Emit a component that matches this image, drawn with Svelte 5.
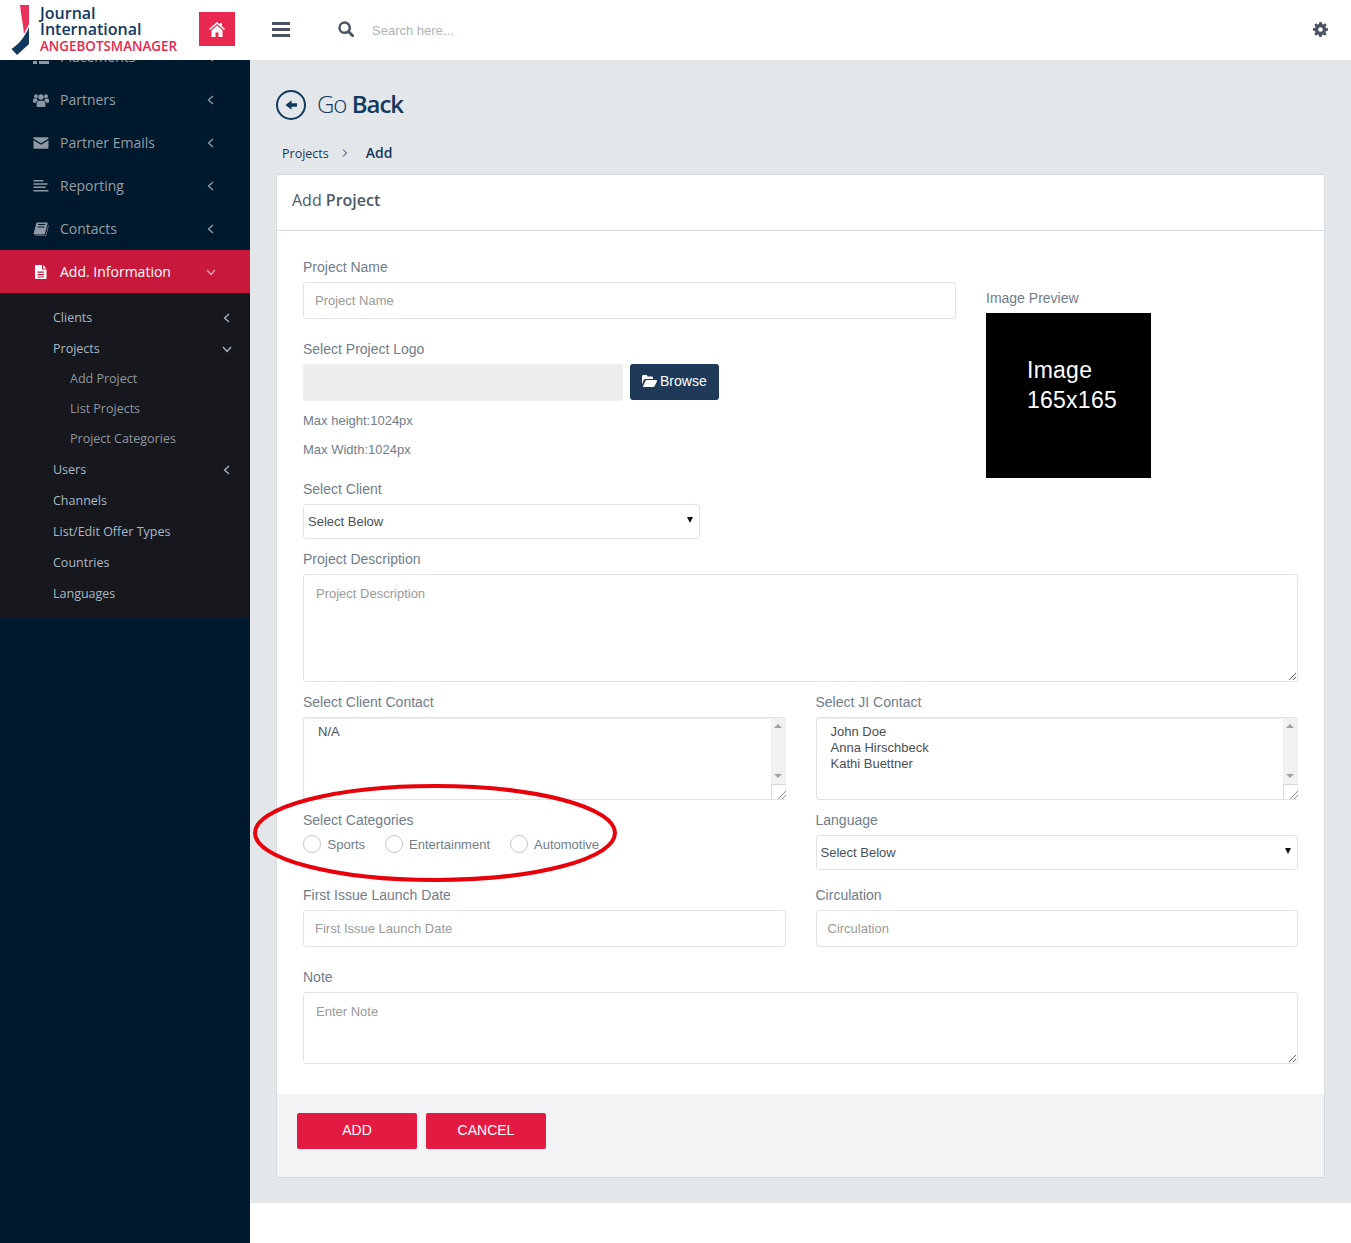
<script>
  const mainNav = [
    { label: 'Placements', icon: 'list' },
    { label: 'Partners', icon: 'users' },
    { label: 'Partner Emails', icon: 'mail' },
    { label: 'Reporting', icon: 'lines' },
    { label: 'Contacts', icon: 'book' }
  ];

  const subNav = [
    { label: 'Clients', arrow: 'left' },
    { label: 'Projects', arrow: 'down' },
    { label: 'Add Project', nested: true },
    { label: 'List Projects', nested: true },
    { label: 'Project Categories', nested: true },
    { label: 'Users', arrow: 'left' },
    { label: 'Channels' },
    { label: 'List/Edit Offer Types' },
    { label: 'Countries' },
    { label: 'Languages' }
  ];

  const categories = ['Sports', 'Entertainment', 'Automotive'];
</script>

{#snippet chevron(dir)}
  <svg class="chev" width="10" height="10" viewBox="0 0 10 10">
    {#if dir === 'left'}
      <polyline points="7,1 2.5,5 7,9" />
    {:else}
      <polyline points="1,3 5,7.5 9,3" />
    {/if}
  </svg>
{/snippet}

{#snippet navIcon(name)}
  <svg class="nav-icon" width="16" height="14" viewBox="0 0 16 14">
    {#if name === 'list'}
      <path d="M0 1h4v3H0zM6 1h10v3H6zM0 6h4v3H0zM6 6h10v3H6zM0 11h4v3H0zM6 11h10v3H6z" />
    {:else if name === 'users'}
      <circle cx="3" cy="3.2" r="1.9" />
      <circle cx="13" cy="3.2" r="1.9" />
      <circle cx="8" cy="4" r="2.7" />
      <path d="M0 9V7.2C0 6 1 5.6 2 5.6h2c.1.9.5 1.6 1 2-1 .3-1.8 1-2 2.2H1C.4 9.8 0 9.600 0 9zM16 9V7.200C16 6 15 5.600 14 5.600h-2c-.1.9-.5 1.600-1 2 1 .3 1.800 1 2 2.200h2c.6 0 1-.2 1-.8zM3.600 13V10.500C3.600 8.800 4.800 7.800 6 7.800h4c1.200 0 2.400 1 2.400 2.700V13c0 .6-.5 1-1 1H4.600c-.5 0-1-.4-1-1z" />
    {:else if name === 'mail'}
      <path d="M0.500 2.200C.5 1.500 1 1.200 1.600 1.200h12.800c.6 0 1.100.4 1.100 1v.5L8 7.300 .5 2.700zM.5 4.200L8 8.800l7.500-4.600v7.600c0 .6-.5 1-1.100 1H1.600c-.6 0-1.100-.4-1.100-1z" />
    {:else if name === 'lines'}
      <path d="M.5 1h10v1.500H.5zM.5 4.300h14v1.500H.5zM.5 7.600h12v1.500H.5zM.5 10.900h15v1.500H.5z" />
    {:else if name === 'book'}
      <path d="M3.500 0.500h10.500c.6 0 .8.500.6 1L12.200 11c-.3 1-.9 1.500-1.800 1.500H1.800C.9 12.500.6 11.800 .8 11zM5 3h7l.3-1H5.300zM4.400 5.500h7l.3-1H4.700zM2.500 13.500h8.500c1 0 1.800-.6 2.200-1.600l2-8.900.5.500-2.100 9.200c-.3 1-1.200 1.800-2.300 1.800H2.500z" />
    {:else}
      <path d="M3 0h6v4.500h4.500V13c0 .6-.4 1-1 1H3c-.6 0-1-.4-1-1V1c0-.6.4-1 1-1zM10 0l3.500 3.500H10zM4.500 6.500v1.200h6.500V6.500zM4.500 9v1.200h6.500V9zM4.500 11.400v1.100h6.500v-1.100z" />
    {/if}
  </svg>
{/snippet}

<div class="page">
  <header class="topbar">
    <div class="logo">
      <svg width="30" height="60" viewBox="0 0 30 60">
        <path d="M20 5h9v19l-5 10C23 24 21 14 20 5z" fill="#e8325a" />
        <path d="M29 27v17L17 55l-5.500-6C18 45 25 37 29 27z" fill="#12395f" />
      </svg>
      <div class="logo-text">
        <span class="logo-name">Journal</span>
        <span class="logo-name">International</span>
        <span class="logo-sub">ANGEBOTSMANAGER</span>
      </div>
    </div>
    <button class="home" aria-label="Home">
      <svg width="16" height="15" viewBox="0 0 16 15" fill="#fff">
        <path d="M8 0l3 2.600V1h2v3.300L16 7l-.9 1L8 2 .9 8 0 7zM2.500 8.200L8 3.500l5.500 4.700V15H9.500v-4.500h-3V15h-4z" />
      </svg>
    </button>
    <div class="burger"><span></span><span></span><span></span></div>
    <svg class="search-icon" width="16" height="16" viewBox="0 0 18 18" fill="none" stroke="#4a5464">
      <circle cx="7.500" cy="7.500" r="5.800" stroke-width="2.800" />
      <path d="M12 12l4.500 4.500" stroke-width="3.200" stroke-linecap="round" />
    </svg>
    <input class="search" placeholder="Search here..." />
    <svg class="gear" width="15" height="15" viewBox="0 0 16 16" fill="#4a5464">
      <path fill-rule="evenodd" d="M6.700 0h2.600l.4 2.200 1.200.5L12.800 1.400l1.800 1.800-1.300 1.900.5 1.200 2.200.4v2.600l-2.200.4-.5 1.200 1.300 1.900-1.800 1.800-1.900-1.300-1.200.5-.4 2.200H6.700l-.4-2.200-1.200-.5-1.900 1.300-1.800-1.800 1.300-1.900-.5-1.200L0 9.300V6.700l2.200-.4.500-1.200L1.400 3.200l1.800-1.800 1.900 1.300 1.200-.5zM8 5.500a2.500 2.500 0 1 0 0 5 2.500 2.500 0 0 0 0-5z" />
    </svg>
  </header>

  <div class="layout">
    <aside class="sidebar">
      <nav class="nav">
        {#each mainNav as item}
          <div class="nav-item">
            {@render navIcon(item.icon)}
            <span class="nav-label">{item.label}</span>
            {@render chevron('left')}
          </div>
        {/each}
        <div class="nav-item active">
          {@render navIcon('file')}
          <span class="nav-label">Add. Information</span>
          {@render chevron('down')}
        </div>
        <div class="sub-nav">
          {#each subNav as item}
            <div class="sub-item" class:nested={item.nested}>
              <span>{item.label}</span>
              {#if item.arrow}
                {@render chevron(item.arrow)}
              {/if}
            </div>
          {/each}
        </div>
      </nav>
    </aside>

    <div class="main-wrap">
      <main class="main">
        <div class="go-back">
          <svg width="30" height="30" viewBox="0 0 30 30" fill="none">
            <circle cx="15" cy="15" r="14" stroke="#12395f" stroke-width="2" />
            <path d="M15.500 10.200v3h5.500v3.600h-5.500v3L9.500 15z" fill="#12395f" />
          </svg>
          <h1>Go <b>Back</b></h1>
        </div>

        <div class="crumbs">
          <span>Projects</span>
          <svg width="8" height="10" viewBox="0 0 8 10" fill="none" stroke="#12395f" stroke-width="1">
            <polyline points="2,1.500 5.500,5 2,8.500" />
          </svg>
          <b>Add</b>
        </div>

        <section class="card">
          <div class="card-head">Add <b>Project</b></div>
          <div class="card-body">
            <div class="top-row">
              <div>
                <div class="field wide">
                  <label for="pname">Project Name</label>
                  <input id="pname" placeholder="Project Name" />
                </div>
                <div class="field">
                  <span class="lbl">Select Project Logo</span>
                  <div class="file-row">
                    <div class="file-box"></div>
                    <button class="browse">
                      <svg width="15" height="12" viewBox="0 0 15 12" fill="#fff">
                        <path d="M0 9.500V1.500C0 .7.600 0 1.300 0h3c.7 0 1.200.7 1.200 1.500h4.200c.7 0 1.300.5 1.300 1.200V4H3.500C2.700 4 2 4.500 1.600 5.200zM.8 11.800l2.500-5.600C3.600 5.500 4.100 5 4.800 5H14c.8 0 1.200.7.900 1.400l-2.400 4.800c-.3.500-.8.800-1.400.8H1.300c-.4 0-.6-.1-.5-.2z" />
                      </svg>
                      Browse
                    </button>
                  </div>
                  <p class="hint first">Max height:1024px</p>
                  <p class="hint">Max Width:1024px</p>
                </div>
                <div class="field client">
                  <label for="client">Select Client</label>
                  <div class="select-wrap">
                    <select id="client"><option>Select Below</option></select>
                  </div>
                </div>
              </div>
              <div class="preview">
                <span class="lbl">Image Preview</span>
                <div class="preview-img"><span>Image<br />165x165</span></div>
              </div>
            </div>

            <div class="field">
              <label for="desc">Project Description</label>
              <textarea id="desc" class="desc" placeholder="Project Description"></textarea>
            </div>

            <div class="two-col">
              <div class="field">
                <span class="lbl">Select Client Contact</span>
                <div class="picker">
                  <div class="picker-text">N/A</div>
                  <div class="scroll"><i class="up"></i><i class="down"></i><span class="grip"></span></div>
                </div>
              </div>
              <div class="field">
                <span class="lbl">Select JI Contact</span>
                <div class="picker">
                  <div class="picker-text">
                    <div>John Doe</div>
                    <div>Anna Hirschbeck</div>
                    <div>Kathi Buettner</div>
                  </div>
                  <div class="scroll"><i class="up"></i><i class="down"></i><span class="grip"></span></div>
                </div>
              </div>
            </div>

            <div class="two-col mid">
              <div>
                <span class="lbl">Select Categories</span>
                <div class="radios">
                  {#each categories as cat}
                    <span class="radio"><i></i>{cat}</span>
                  {/each}
                </div>
              </div>
              <div>
                <label for="lang" class="lang-label">Language</label>
                <div class="select-wrap full">
                  <select id="lang"><option>Select Below</option></select>
                </div>
              </div>
            </div>

            <div class="two-col">
              <div class="field wide">
                <label for="launch">First Issue Launch Date</label>
                <input id="launch" placeholder="First Issue Launch Date" />
              </div>
              <div class="field wide">
                <label for="circ">Circulation</label>
                <input id="circ" placeholder="Circulation" />
              </div>
            </div>

            <div class="field last">
              <label for="note">Note</label>
              <textarea id="note" class="note" placeholder="Enter Note"></textarea>
            </div>
          </div>
          <div class="card-foot">
            <button class="action">ADD</button>
            <button class="action">CANCEL</button>
          </div>
        </section>
      </main>
    </div>
  </div>

  <!-- hand drawn annotation over the form -->
  <svg class="annotation" width="368" height="102" viewBox="0 0 368 102" fill="none">
    <ellipse cx="182" cy="49" rx="180" ry="47" stroke="#e8000b" stroke-width="4" />
  </svg>
</div>

<style>
  :global(body) {
    margin: 0;
    background: #fff;
    font-family: "Liberation Sans", Arial, sans-serif;
  }

  .page {
    position: relative;
    width: 1351px;
    height: 1243px;
    overflow: hidden;
  }

  .topbar {
    position: relative;
    z-index: 2;
    display: flex;
    align-items: center;
    height: 60px;
    background: #fff;
  }

  .logo {
    display: flex;
    width: 199px;
    height: 60px;
  }

  .logo-text {
    display: flex;
    flex-direction: column;
    margin: 5px 0 0 10px;
    font-family: "Open Sans", sans-serif;
    font-weight: 600;
    white-space: nowrap;
  }

  .logo-name {
    color: #12395f;
    font-size: 16px;
    line-height: 16px;
  }

  .logo-sub {
    margin-top: 1px;
    color: #e8284f;
    font-size: 13.400px;
    line-height: 16px;
  }

  .home {
    display: flex;
    align-items: center;
    justify-content: center;
    width: 36px;
    height: 34px;
    margin-top: -2px;
    padding: 0;
    border: 0;
    background: #e8284f;
  }

  .burger {
    display: flex;
    flex-direction: column;
    gap: 3px;
    width: 18px;
    margin: -2px 0 0 37px;
  }

  .burger span {
    height: 3px;
    background: #4a5464;
  }

  .search-icon {
    margin: -2px 0 0 48px;
  }

  .search {
    flex: 1;
    height: 30px;
    margin-left: 18px;
    padding: 0;
    border: 0;
    outline: 0;
    font-family: inherit;
    font-size: 13px;
  }

  .search::placeholder {
    color: #b0b3b8;
  }

  .gear {
    margin: -2px 23px 0 0;
  }

  .layout {
    display: flex;
    height: 1183px;
  }

  .sidebar {
    flex: none;
    width: 250px;
    background: #01192d;
  }

  .nav {
    margin-top: -25px;
    font-family: "Open Sans", sans-serif;
  }

  .nav-item {
    display: flex;
    align-items: center;
    height: 43px;
    padding: 0 34px 0 33px;
    color: #949ea6;
    font-size: 14px;
  }

  .nav-icon {
    flex: none;
    fill: #8e99a5;
  }

  .nav-label {
    flex: 1;
    margin-left: 11px;
  }

  .chev {
    flex: none;
    fill: none;
    stroke: currentColor;
    stroke-width: 1.300;
  }

  .active {
    background: #c8183b;
    color: #fff;
  }

  .active .nav-icon {
    fill: #fff;
  }

  .active .chev {
    opacity: 0.6;
  }

  .sub-nav {
    padding: 8px 18px 10px 53px;
    background: #16181d;
  }

  .sub-item {
    display: flex;
    align-items: center;
    justify-content: space-between;
    height: 31px;
    padding-top: 2px;
    box-sizing: border-box;
    color: #a9b8c4;
    font-size: 12.500px;
  }

  .sub-item.nested {
    height: 30px;
    padding: 0 0 0 17px;
    color: #8f979e;
  }

  .main-wrap {
    flex: 1;
    min-width: 0;
  }

  .main {
    padding: 30px 26px 25px;
    background: #e4e7ea;
  }

  .go-back {
    display: flex;
    align-items: center;
    gap: 11px;
    height: 30px;
  }

  h1 {
    margin: -4px 0 0;
    color: #12395f;
    font-family: "Open Sans", sans-serif;
    font-size: 24px;
    font-weight: 300;
    letter-spacing: -1px;
  }

  h1 b {
    font-weight: 600;
  }

  .crumbs {
    display: flex;
    align-items: center;
    height: 20px;
    margin-top: 23px;
    padding-left: 6px;
    color: #12395f;
    font-family: "Open Sans", sans-serif;
    font-size: 12.500px;
  }

  .crumbs svg {
    margin: 0 17px 0 12px;
  }

  .crumbs b {
    margin-top: -2px;
    font-size: 14px;
    font-weight: 600;
  }

  .card {
    margin-top: 11px;
    border: 1px solid #d8dbde;
    background: #fff;
  }

  .card-head {
    height: 55px;
    padding-left: 15px;
    border-bottom: 1px solid #d8dbde;
    color: #4d5a66;
    font-family: "Open Sans", sans-serif;
    font-size: 16px;
    line-height: 51px;
  }

  .card-head b {
    font-weight: 600;
  }

  .card-body {
    padding: 28px 26px 30px;
  }

  .top-row {
    display: grid;
    grid-template-columns: 653px 165px;
    gap: 30px;
  }

  .preview {
    padding-top: 31px;
  }

  .preview-img {
    display: flex;
    width: 165px;
    height: 165px;
    padding: 42px 0 0 41px;
    box-sizing: border-box;
    background: #000;
    color: #fff;
    font-size: 23px;
    letter-spacing: 0.250px;
    line-height: 30px;
  }

  .field {
    margin-bottom: 12px;
  }

  .field.wide {
    margin-bottom: 22px;
  }

  .field.last {
    margin-bottom: 0;
  }

  label,
  .lbl {
    display: block;
    height: 17px;
    margin-bottom: 6px;
    color: #707d8c;
    font-size: 14px;
    line-height: 17px;
  }

  input:not(.search),
  textarea,
  select {
    display: block;
    width: 100%;
    box-sizing: border-box;
    border: 1px solid #e0e3e6;
    border-radius: 3px;
    background: #fff;
    color: #4a4f55;
    font-family: "Liberation Sans", Arial, sans-serif;
    font-size: 13px;
    outline: 0;
  }

  input:not(.search) {
    height: 37px;
    padding: 0 11px;
  }

  ::placeholder {
    color: #9a9a9a;
    opacity: 1;
  }

  .select-wrap {
    position: relative;
    width: 397px;
  }

  .select-wrap.full {
    width: auto;
  }

  /* little native looking arrow */
  .select-wrap::after {
    content: "";
    position: absolute;
    top: 13px;
    right: 7px;
    border-top: 6px solid #111;
    border-left: 3px solid transparent;
    border-right: 3px solid transparent;
    pointer-events: none;
  }

  select {
    height: 35px;
    padding: 0 4px;
    appearance: none;
  }

  textarea {
    padding: 11px 12px;
  }

  .file-row {
    display: flex;
    gap: 7px;
  }

  .file-box {
    width: 320px;
    height: 37px;
    border-radius: 3px;
    background: #eeeeee;
  }

  .browse {
    display: flex;
    align-items: center;
    gap: 3px;
    width: 89px;
    height: 36px;
    padding: 0 0 2px 12px;
    border: 0;
    border-radius: 3px;
    background: #1f3a58;
    color: #fff;
    font-family: inherit;
    font-size: 14px;
  }

  .hint {
    height: 17px;
    margin: 12px 0 0;
    color: #707d8c;
    font-size: 13px;
    line-height: 17px;
  }

  .hint.first {
    margin-top: 11px;
  }

  .hint:last-child {
    margin-bottom: 23px;
  }

  .desc {
    height: 108px;
  }

  .note {
    height: 72px;
  }

  .two-col {
    display: grid;
    grid-template-columns: 1fr 1fr;
    gap: 30px;
  }

  .picker {
    display: flex;
    height: 83px;
    box-sizing: border-box;
    border: 1px solid #e0e3e6;
    border-right: 0;
    border-radius: 3px;
    box-shadow: inset 0 1px 1px #eceef0;
    overflow: hidden;
  }

  .picker-text {
    flex: 1;
    padding: 6px 14px;
    color: #4a4f55;
    font-size: 13px;
    line-height: 16px;
  }

  .scroll {
    position: relative;
    width: 15px;
    background: #f1f1f1;
  }

  .scroll i {
    position: absolute;
    left: 3px;
    border-left: 4px solid transparent;
    border-right: 4px solid transparent;
  }

  .scroll .up {
    top: 6px;
    border-bottom: 4px solid #a3a3a3;
  }

  .scroll .down {
    bottom: 21px;
    border-top: 4px solid #a3a3a3;
  }

  .grip {
    position: absolute;
    right: 0;
    bottom: 0;
    width: 15px;
    height: 15px;
    box-sizing: border-box;
    border: 1px solid #d9d9d9;
    border-width: 1px 0 0 1px;
    background: linear-gradient(135deg, #fff 68%, #888 68%, #888 72%, #fff 72%, #fff 84%, #888 84%, #888 88%, #fff 88%);
  }

  .mid {
    margin-bottom: 17px;
  }

  .lang-label {
    height: 23px;
    margin-bottom: 0;
  }

  .radios {
    display: flex;
    gap: 19.500px;
    margin-top: 6px;
    color: #707d8c;
    font-size: 13px;
  }

  .radio {
    display: flex;
    align-items: center;
    gap: 6.500px;
    height: 18px;
  }

  .radio i {
    width: 16px;
    height: 16px;
    border: 1px solid #c4c8cc;
    border-radius: 50%;
  }

  .card-foot {
    display: flex;
    gap: 9px;
    height: 83px;
    padding: 19px 20px 0;
    box-sizing: border-box;
    background: #f1f3f5;
  }

  .action {
    width: 120px;
    height: 36px;
    padding: 0 0 2px;
    border: 0;
    border-radius: 2px;
    background: #e31b43;
    color: #fff;
    font-family: "Liberation Sans", Arial, sans-serif;
    font-size: 14px;
  }

  .annotation {
    position: absolute;
    left: 253px;
    top: 784px;
    z-index: 3;
  }
</style>
